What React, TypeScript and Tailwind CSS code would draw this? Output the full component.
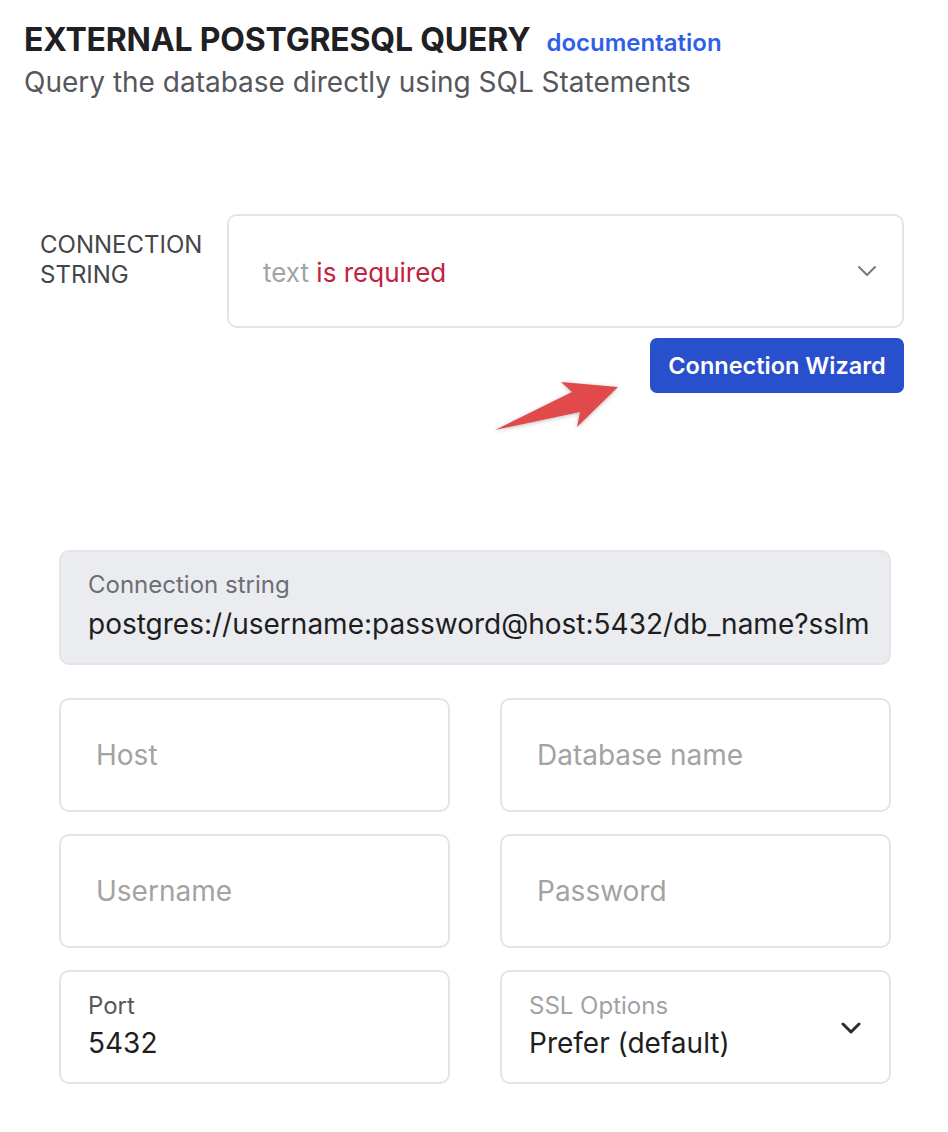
import React from "react";

const Chevron = ({ className, stroke = 2 }: { className?: string; stroke?: number }) => (
  <svg className={className} viewBox="0 0 20 12" fill="none" stroke="currentColor" strokeWidth={stroke} strokeLinecap="round" strokeLinejoin="round">
    <path d="M2 2l8 8 8-8" />
  </svg>
);

const Placeholder = ({ text }: { text: string }) => (
  <div className="h-[114px] rounded-[10px] border-2 border-[#e2e4e8] bg-white flex items-center pl-[35px]">
    <span className="text-[28px] leading-[36px] text-[#a3a3a3]">{text}</span>
  </div>
);

export default function App() {
  return (
    <div className="min-h-[1132px] w-[948px] bg-white font-['Inter',sans-serif] pt-[20px]">
      <div className="pl-[24px]">
        <div className="flex items-baseline gap-[16px]">
          <h1 className="text-[32px] leading-[40px] font-bold text-[#1f2023] tracking-[-0.2px]">EXTERNAL POSTGRESQL QUERY</h1>
          <a className="text-[24px] leading-[40px] font-semibold text-[#2f5fe8]">documentation</a>
        </div>
        <p className="text-[28px] text-[#55575c] leading-[36px] mt-[1px]">Query the database directly using SQL Statements</p>
      </div>

      <div className="mt-[114px] flex pl-[40px] pr-[44px]">
        <div className="w-[187px] pt-[16px] text-[24px] leading-[30px] text-[#44464a] uppercase">
          Connection
          <br />
          String
        </div>
        <div className="flex-1">
          <div className="h-[114px] rounded-[10px] border-2 border-[#e2e4e8] flex items-center justify-between pl-[34px] pr-[25px]">
            <span className="text-[26px] leading-[36px] pt-[4px]">
              <span className="text-[#a3a3a3]">text</span> <span className="text-[#c1223f]">is required</span>
            </span>
            <Chevron className="w-[20px] h-[12px] text-[#7a7a7a]" stroke={2} />
          </div>
          <div className="flex justify-end mt-[10px] relative">
            <button className="h-[55px] w-[254px] rounded-[7px] bg-[#2850cc] text-white text-[23.5px] font-semibold">
              Connection Wizard
            </button>
            <svg className="absolute left-[268px] top-[39px] w-[130px] h-[60px]" viewBox="495 378 130 60" style={{ filter: "drop-shadow(0 1px 2px rgba(0,0,0,0.25))" }}>
              <polygon points="495,431 572,393 561,383 618,388 577,428 580,413" fill="#e2494b" />
            </svg>
          </div>
        </div>
      </div>

      <div className="mt-[157px] pl-[59px] pr-[57px]">
        <div className="h-[115px] rounded-[10px] bg-[#ebecf0] border-2 border-[#e4e5e9] pl-[27px] pr-[21px] pt-[19px] overflow-hidden">
          <div className="text-[24px] text-[#6b6e74] leading-[28px]">Connection string</div>
          <div className="text-[28px] text-[#1d1e20] leading-[40px] mt-[5px] whitespace-nowrap overflow-hidden">
            postgres://username:password@host:5432/db_name?sslmode=prefer
          </div>
        </div>

        <div className="grid grid-cols-2 gap-x-[50px] gap-y-[22px] mt-[33px]">
          <Placeholder text="Host" />
          <Placeholder text="Database name" />
          <Placeholder text="Username" />
          <Placeholder text="Password" />
          <div className="h-[114px] rounded-[10px] border-2 border-[#e2e4e8] pl-[27px] pt-[20px]">
            <div className="text-[24px] text-[#55575c] leading-[28px]">Port</div>
            <div className="text-[28px] text-[#1d1e20] leading-[40px] mt-[3px]">5432</div>
          </div>
          <div className="h-[114px] rounded-[10px] border-2 border-[#e2e4e8] pl-[27px] pr-[28px] pt-[20px] flex justify-between">
            <div>
              <div className="text-[24px] text-[#a0a2a6] leading-[28px]">SSL Options</div>
              <div className="text-[28px] text-[#1d1e20] leading-[40px] mt-[3px]">Prefer (default)</div>
            </div>
            <Chevron className="w-[20px] h-[12px] mt-[30px] text-[#2a2c30]" stroke={3} />
          </div>
        </div>
      </div>
    </div>
  );
}
